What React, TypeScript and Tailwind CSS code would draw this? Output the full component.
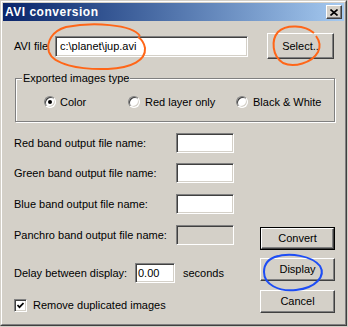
const sunken =
  'border border-t-[#808080] border-l-[#808080] border-b-white border-r-white shadow-[inset_1px_1px_0_#404040,inset_-1px_-1px_0_#d4d0c8]'
const raised =
  'border border-t-white border-l-white border-b-[#404040] border-r-[#404040] shadow-[inset_-1px_-1px_0_#808080]'

const Radio = ({ checked = false }: { checked?: boolean }) => (
  <span className="flex items-center justify-center w-[12px] h-[12px] rounded-full bg-white border border-t-[#808080] border-l-[#808080] border-b-white border-r-white shadow-[inset_1px_1px_0_#404040,inset_-1px_-1px_0_#d4d0c8]">
    {checked && <span className="w-[4px] h-[4px] rounded-full bg-black" />}
  </span>
)

const Button = ({ label, isDefault = false }: { label: string; isDefault?: boolean }) => (
  <div className={`w-[75px] h-[23px] ${isDefault ? 'border border-black' : ''}`}>
    <div className={`w-full h-full flex items-center justify-center ${raised}`}>{label}</div>
  </div>
)

const BandRow = ({ label, disabled = false, className = '' }: { label: string; disabled?: boolean; className?: string }) => (
  <div className={`flex items-center h-[20px] ${className}`}>
    <span className="w-[162px]">{label}</span>
    <div className={`w-[58px] h-[20px] ${disabled ? 'bg-[#d4d0c8]' : 'bg-white'} ${sunken}`} />
  </div>
)

export default function App() {
  return (
    <div className="relative w-[348px] h-[327px] bg-[#d4d0c8] font-['Liberation_Sans',Arial,sans-serif] text-[11px] text-black leading-none">
      <div className="w-[347px] h-[326px] border border-t-[#d4d0c8] border-l-[#d4d0c8] border-b-[#404040] border-r-[#404040]">
        <div className="w-full h-full border border-t-white border-l-white border-b-[#808080] border-r-[#808080] p-px">
          {/* title bar */}
          <div className="h-[18px] flex items-center justify-between pl-[2px] pr-[2px] bg-linear-to-r from-[#0a246a] to-[#a6caf0]">
            <span className="text-white font-bold text-[12px] tracking-[0.5px]">AVI conversion</span>
            <div className={`w-[16px] h-[14px] bg-[#d4d0c8] flex items-center justify-center ${raised}`}>
              <svg width="8" height="7" viewBox="0 0 8 7">
                <path d="M0.5 0.5 L7.5 6.5 M7.5 0.5 L0.5 6.5" stroke="black" strokeWidth="1.6" />
              </svg>
            </div>
          </div>

          {/* body */}
          <div className="pl-[11px]">
            <div className="mt-[12px] h-[26px] flex items-center">
              <span className="w-[41px]">AVI file</span>
              <div className={`w-[193px] h-[21px] bg-white flex items-center pl-[4px] ${sunken}`}>c:\planet\jup.avi</div>
              <div className="ml-[19px]">
                <div className={`w-[67px] h-[26px] flex items-center justify-center ${raised}`}>Select..</div>
              </div>
            </div>

            <div className="relative mt-[19px] ml-[1px] w-[320px] h-[44px] border border-[#808080] shadow-[inset_1px_1px_0_white,1px_1px_0_white]">
              <span className="absolute -top-[7px] left-[6px] px-[1px] bg-[#d4d0c8] leading-[13px]">Exported images type</span>
              <div className="flex items-center pt-[17px] pl-[28px]">
                <div className="w-[84px] flex items-center gap-[4px]">
                  <Radio checked />
                  <span>Color</span>
                </div>
                <div className="w-[108px] flex items-center gap-[5px]">
                  <Radio />
                  <span>Red layer only</span>
                </div>
                <div className="flex items-center gap-[5px]">
                  <Radio />
                  <span>Black &amp; White</span>
                </div>
              </div>
            </div>

            <BandRow label="Red band output file name:" className="mt-[11px]" />
            <BandRow label="Green band output file name:" className="mt-[10px]" />
            <BandRow label="Blue band output file name:" className="mt-[11px]" />

            <div className="flex">
              <div className="w-[246px]">
                <BandRow label="Panchro band output file name:" disabled className="mt-[11px]" />
                <div className="mt-[18px] h-[20px] flex items-center">
                  <span className="w-[121px]">Delay between display:</span>
                  <div className={`w-[40px] h-[20px] bg-white flex items-center pl-[2px] ${sunken}`}>0.00</div>
                  <span className="ml-[8px]">seconds</span>
                </div>
                <div className="mt-[16px] h-[13px] flex items-center">
                  <div className={`w-[13px] h-[13px] bg-white flex items-center justify-center ${sunken}`}>
                    <svg width="7" height="7" viewBox="0 0 7 7">
                      <polyline points="0.5,3 2.5,5.2 6.5,1" fill="none" stroke="black" strokeWidth="1.7" />
                    </svg>
                  </div>
                  <span className="ml-[6px]">Remove duplicated images</span>
                </div>
              </div>
              <div className="pt-[13px] flex flex-col">
                <Button label="Convert" isDefault />
                <div className="mt-[8px]">
                  <Button label="Display" />
                </div>
                <div className="mt-[9px]">
                  <Button label="Cancel" />
                </div>
              </div>
            </div>
          </div>
        </div>
      </div>

      {/* hand-drawn annotations */}
      <svg className="absolute inset-0 pointer-events-none" width="348" height="327" viewBox="0 0 348 327">
        <path
          d="M140 36 C132 24, 92 22, 66 27 C52 31, 46 42, 49 52 C53 64, 78 70, 108 69 C132 68, 146 60, 145 48 C144 42, 141 39, 138 37"
          fill="none"
          stroke="#ff6618"
          strokeWidth="2"
        />
        <path
          d="M314 33 C305 25, 286 24, 278 32 C271 40, 272 56, 283 63 C294 68, 312 63, 318 52 C321 46, 319 40, 316 36"
          fill="none"
          stroke="#ff6618"
          strokeWidth="2"
        />
        <path
          d="M275 257 C290 252, 312 256, 320 266 C326 276, 316 288, 296 290 C278 292, 264 284, 264 272 C264 263, 270 258, 278 256"
          fill="none"
          stroke="#1d4df5"
          strokeWidth="2"
        />
      </svg>
    </div>
  )
}
